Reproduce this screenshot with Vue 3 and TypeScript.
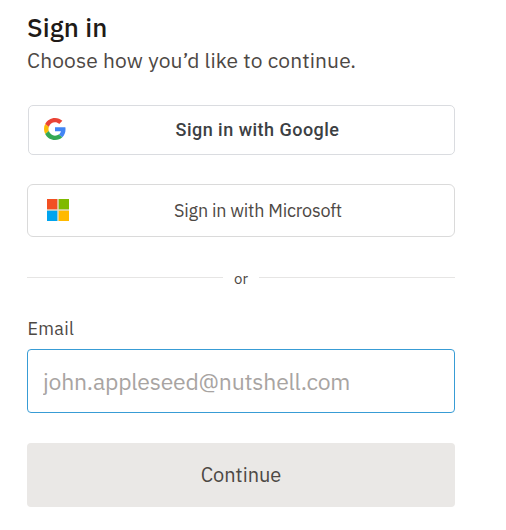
<script setup lang="ts">
import { ref } from 'vue'

const email = ref<string>('')
</script>

<template>
  <main class="sign-in">
    <h1 class="title">Sign in</h1>
    <p class="subtitle">Choose how you’d like to continue.</p>

    <button class="provider google" type="button">
      <svg class="google-logo" viewBox="0 0 48 48" aria-hidden="true">
        <path fill="#EA4335" d="M24 9.5c3.54 0 6.71 1.22 9.21 3.6l6.85-6.85C35.9 2.38 30.47 0 24 0 14.62 0 6.51 5.38 2.56 13.22l7.98 6.19C12.43 13.72 17.74 9.5 24 9.5z" />
        <path fill="#4285F4" d="M46.98 24.55c0-1.57-.15-3.09-.38-4.55H24v9.02h12.94c-.58 2.96-2.26 5.48-4.78 7.18l7.73 6c4.51-4.18 7.09-10.36 7.09-17.65z" />
        <path fill="#FBBC05" d="M10.53 28.59c-.48-1.45-.76-2.99-.76-4.59s.27-3.14.76-4.59l-7.98-6.19C.92 16.46 0 20.12 0 24c0 3.88.92 7.54 2.56 10.78l7.97-6.19z" />
        <path fill="#34A853" d="M24 48c6.48 0 11.93-2.13 15.89-5.81l-7.73-6c-2.15 1.45-4.92 2.3-8.16 2.3-6.26 0-11.57-4.22-13.47-9.91l-7.98 6.19C6.51 42.62 14.62 48 24 48z" />
      </svg>
      <span class="provider-label">Sign in with Google</span>
    </button>

    <button class="provider microsoft" type="button">
      <svg class="microsoft-logo" viewBox="0 0 22 22" aria-hidden="true">
        <path fill="#e4ddc9" d="M0 0h22v22H0z" />
        <path fill="#f25022" d="M0 0h10.3v10.3H0z" />
        <path fill="#7fba00" d="M11.7 0H22v10.3H11.7z" />
        <path fill="#00a4ef" d="M0 11.7h10.3V22H0z" />
        <path fill="#ffb900" d="M11.7 11.7H22V22H11.7z" />
      </svg>
      <span class="provider-label">Sign in with Microsoft</span>
    </button>

    <div class="divider"><span class="or">or</span></div>

    <label class="label" for="email">Email</label>
    <input id="email" v-model="email" class="field" type="email" placeholder="john.appleseed@nutshell.com" />
    <button class="continue" type="button"><span>Continue</span></button>
  </main>
</template>

<style>
body {
  background: #fff;
}
</style>

<style scoped>
.sign-in {
  box-sizing: border-box;
  display: flex;
  flex-direction: column;
  width: 455px;
  height: 530px;
  padding: 11px 0 0 27px;
  color: #4d4844;
  font-family: "IBM Plex Sans", Roboto, sans-serif;
}

.title {
  margin: 0;
  color: #201a17;
  font-size: 26px;
  font-weight: 500;
  letter-spacing: 0.1px;
  line-height: 32px;
}

.subtitle {
  margin: 2px 0 0;
  font-size: 21px;
  letter-spacing: 0.12px;
  line-height: 30px;
}

.provider {
  box-sizing: border-box;
  display: grid;
  grid-template-columns: 1fr;
  align-items: center;
  padding: 0;
  border: 1px solid #dadada;
  border-radius: 6px;
  background: #fff;
  color: inherit;
  font: inherit;
  font-size: 18px;
}

.provider > * {
  grid-area: 1 / 1;
}

.google {
  height: 50px;
  margin: 30px 0 0 1px;
  border-color: #dadce0;
  border-radius: 5px;
  color: #3c4043;
  font-family: Roboto, sans-serif;
  font-weight: 500;
  letter-spacing: 0.48px;
}

.google-logo {
  width: 22px;
  height: 22px;
  margin: 0 0 2px 15px;
}

.provider-label {
  padding: 0 0 2px 32px;
  text-align: center;
}

.microsoft {
  height: 53px;
  margin-top: 29px;
  letter-spacing: -0.22px;
}

.microsoft-logo {
  width: 22px;
  height: 22px;
  margin: 0 0 1px 19px;
}

.microsoft .provider-label {
  padding: 0 0 1px 34px;
}

.divider {
  display: flex;
  align-items: center;
  height: 20px;
  margin-top: 31px;
  font-size: 15px;
  line-height: 20px;
}

.divider::before,
.divider::after {
  flex: 1;
  height: 1px;
  margin-bottom: 1px;
  background: #e6e5e4;
  content: "";
}

.or {
  width: 36px;
  padding-top: 2px;
  text-align: center;
}

.label {
  margin: 29px 0 0 0.5px;
  font-size: 18px;
  letter-spacing: 0.3px;
  line-height: 24px;
}

.field {
  box-sizing: border-box;
  width: 100%;
  height: 64px;
  margin: 8px 0 0;
  padding: 0 15px;
  border: 1px solid #389cd5;
  border-radius: 4px;
  outline: none;
  background: #fff;
  color: inherit;
  font: inherit;
  font-size: 23px;
  letter-spacing: -0.23px;
}

.field::placeholder {
  color: #a8a4a2;
  opacity: 1;
}

.continue {
  height: 64px;
  margin: 30px 0 0;
  padding: 0 0 1px;
  border: 0;
  border-radius: 4px;
  background: #eae8e6;
  color: inherit;
  font: inherit;
  font-size: 20px;
}
</style>
